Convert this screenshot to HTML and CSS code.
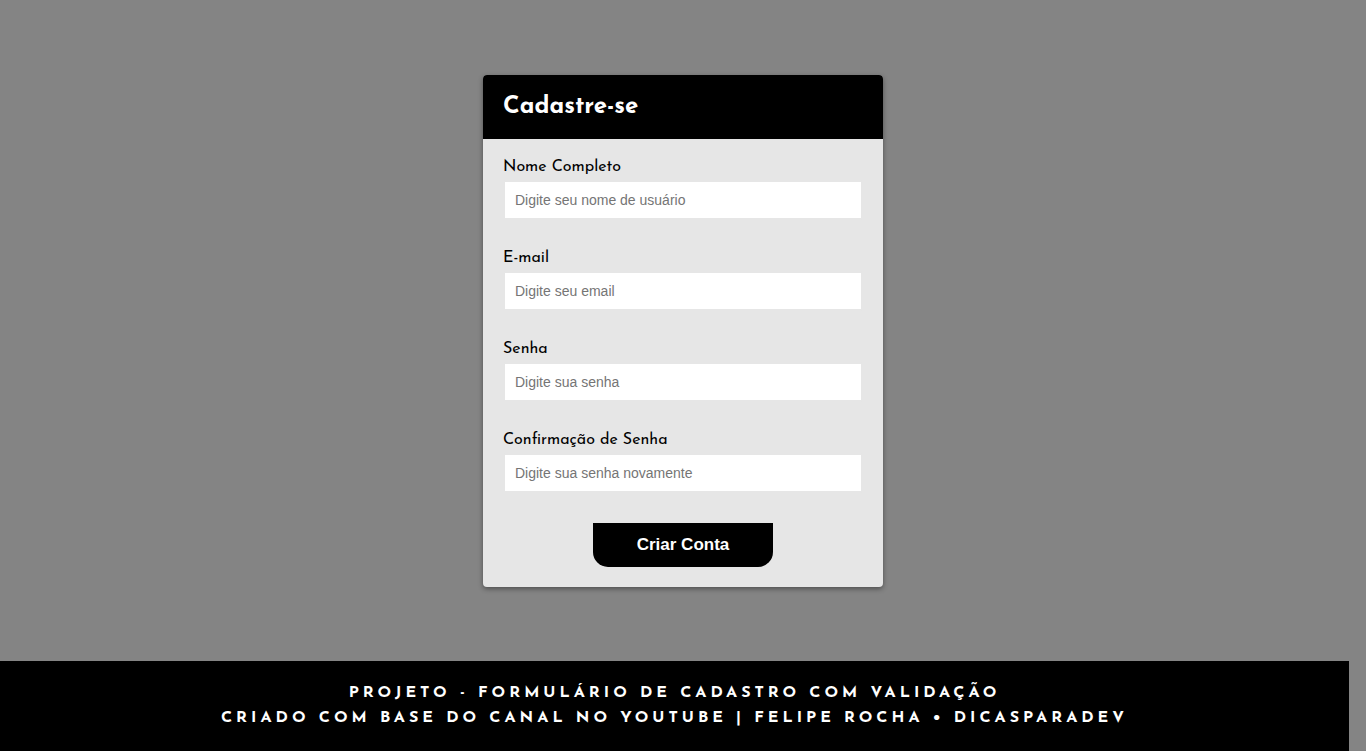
FILE: index.html
```
<!DOCTYPE html>
<html lang="pt-br">
<head>
<meta charset="utf-8">
<meta name="viewport" content="width=device-width, initial-scale=1">
<title>Cadastre-se</title>
<link rel="stylesheet" href="styles.css">
</head>
<body>
<main class="main">
  <section class="card">
    <header class="card-header">
      <h1 class="card-title">Cadastre-se</h1>
    </header>
    <form class="form">
      <div class="field">
        <label for="username">Nome Completo</label>
        <input type="text" id="username" placeholder="Digite seu nome de usuário">
      </div>
      <div class="field">
        <label for="email">E-mail</label>
        <input type="email" id="email" placeholder="Digite seu email">
      </div>
      <div class="field">
        <label for="password">Senha</label>
        <input type="password" id="password" placeholder="Digite sua senha">
      </div>
      <div class="field">
        <label for="confirmation">Confirmação de Senha</label>
        <input type="password" id="confirmation" placeholder="Digite sua senha novamente">
      </div>
      <button class="submit" type="submit">Criar Conta</button>
    </form>
  </section>
</main>
<footer class="footer">
  <p>Projeto - Formulário de Cadastro com Validação</p>
  <p>Criado com base do canal no YouTube | Felipe Rocha • DicasParaDev</p>
</footer>
</body>
</html>
```
FILE: styles.css
```
* {
  box-sizing: border-box;
  margin: 0;
}

body {
  display: flex;
  flex-direction: column;
  min-height: 100vh;
  background: #848484;
  font-family: "Josefin Sans", Lato, sans-serif;
}

.main {
  flex: 1;
  display: flex;
  align-items: center;
  justify-content: center;
}

.card {
  width: 100%;
  max-width: 400px;
  overflow: hidden;
  border-radius: 4px;
  background: #e6e6e6;
  box-shadow: 0 2px 5px rgba(0, 0, 0, 0.4);
}

.card-header {
  padding: 18px 20px;
  background: #000;
  color: #fff;
}

.card-title {
  font-size: 24px;
  line-height: 28px;
  font-weight: 700;
}

.form {
  display: flex;
  flex-direction: column;
  padding: 18px 20px 20px;
}

.field {
  display: flex;
  flex-direction: column;
  gap: 3px;
  margin-bottom: 28px;
}

.field label {
  font-size: 16px;
  line-height: 20px;
  color: #000;
}

.field input {
  width: 100%;
  height: 40px;
  padding: 0 10px;
  border: 2px solid #e6e6e6;
  border-radius: 2px;
  background: #fff;
  font: 14px "Liberation Sans", Arial, sans-serif;
}

.field input::placeholder {
  color: #757575;
}

.submit {
  align-self: center;
  width: 180px;
  height: 44px;
  margin-top: 2px;
  border: 0;
  border-radius: 0 0 15px 15px;
  background: #000;
  color: #fff;
  font: bold 17px "Liberation Sans", Arial, sans-serif;
}

.footer {
  margin-right: 17px;
  padding: 20px;
  background: #000;
  color: #fff;
  text-align: center;
  text-transform: uppercase;
  letter-spacing: 4px;
  font-size: 16px;
  line-height: 25px;
  font-weight: 700;
}
```
